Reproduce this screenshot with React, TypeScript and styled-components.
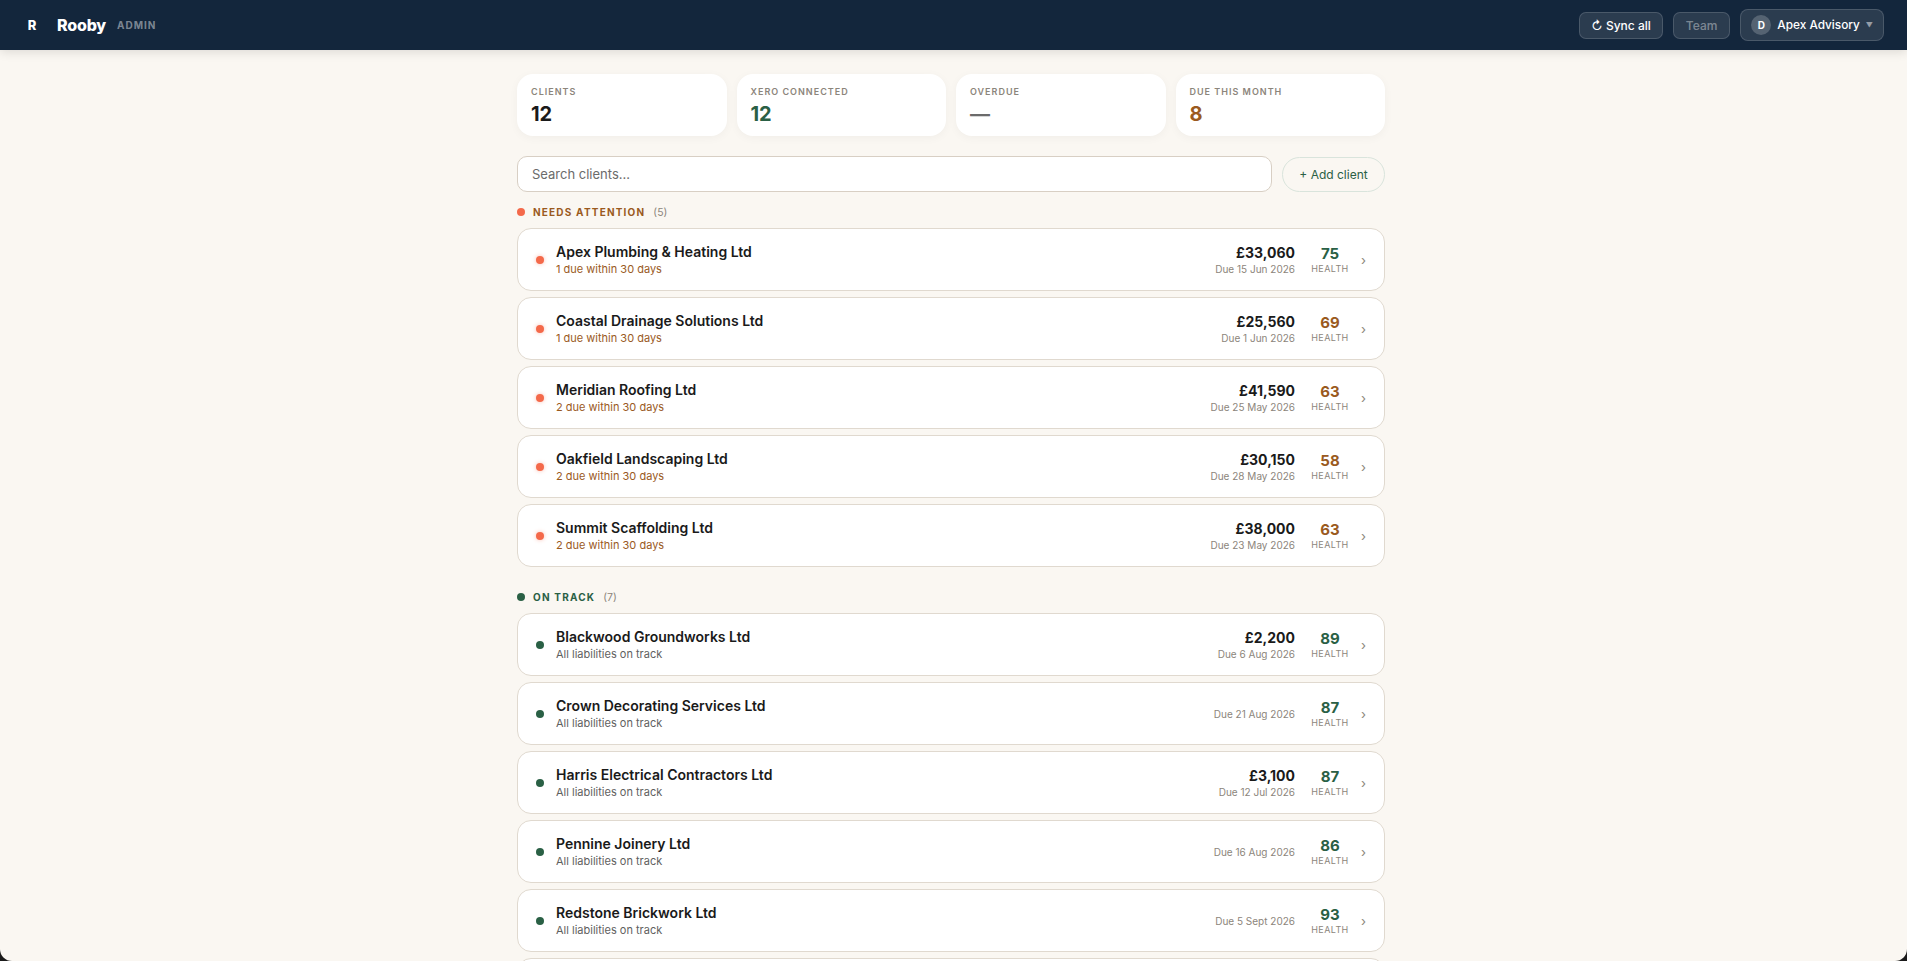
import React from 'react'
import styled, { createGlobalStyle } from 'styled-components'

const GlobalStyle = createGlobalStyle`
  html, body {
    margin: 0;
    height: 100%;
    overflow: hidden;
    background: #1a1a1a;
  }
  * {
    box-sizing: border-box;
  }
`

const Page = styled.div`
  height: 100vh;
  overflow: hidden;
  background: #faf7f2;
  border-radius: 0 0 12px 12px;
  font-family: Inter, "Liberation Sans", sans-serif;
  color: #1a1a1a;
`

const Header = styled.header`
  display: flex;
  align-items: center;
  justify-content: space-between;
  height: 50px;
  padding: 0 23px 0 16px;
  background: #13263c;
  box-shadow: 0 2px 10px rgba(0, 0, 0, 0.12);
`

const Brand = styled.div`
  display: flex;
  align-items: center;
`

const LogoMark = styled.div`
  width: 32px;
  height: 32px;
  display: flex;
  align-items: center;
  justify-content: center;
  color: #fff;
  font-size: 13px;
  font-weight: 800;
`

const BrandName = styled.span`
  margin-left: 9px;
  color: #fff;
  font-size: 16px;
  font-weight: 800;
  letter-spacing: -0.2px;
`

const AdminTag = styled.span`
  margin-left: 11px;
  color: rgba(255, 255, 255, 0.45);
  font-size: 10px;
  font-weight: 700;
  letter-spacing: 1px;
`

const Actions = styled.div`
  display: flex;
  align-items: center;
  gap: 10px;
`

const NavButton = styled.button<{ $muted?: boolean }>`
  height: 27px;
  padding: 0 ${props => (props.$muted ? '12px' : '11px')};
  background: rgba(255, 255, 255, 0.1);
  border: 1px solid rgba(255, 255, 255, 0.15);
  border-radius: 7px;
  color: ${props => (props.$muted ? 'rgba(255, 255, 255, 0.4)' : '#fff')};
  font-family: inherit;
  font-size: 12px;
  font-weight: 500;
`

const OrgSwitch = styled.button`
  display: flex;
  align-items: center;
  gap: 6px;
  height: 32px;
  padding: 0 10px;
  background: rgba(255, 255, 255, 0.1);
  border: 1px solid rgba(255, 255, 255, 0.15);
  border-radius: 8px;
  color: #fff;
  font-family: inherit;
  font-size: 11.8px;
  font-weight: 500;
`

const Avatar = styled.span`
  width: 20px;
  height: 20px;
  display: flex;
  align-items: center;
  justify-content: center;
  border-radius: 50%;
  background: rgba(255, 255, 255, 0.2);
  font-size: 10px;
  font-weight: 700;
`

const Caret = styled.span`
  color: rgba(255, 255, 255, 0.5);
  font-size: 7px;
`

const Main = styled.main`
  width: 868px;
  margin-left: 517px;
  padding-top: 24px;
`

const Stats = styled.div`
  display: grid;
  grid-template-columns: repeat(4, 1fr);
  gap: 10px;
`

const StatCard = styled.div`
  height: 62px;
  padding: 12px 14px;
  background: #fff;
  border-radius: 16px;
  box-shadow: 0 2px 10px rgba(0, 0, 0, 0.04);
`

const StatLabel = styled.div`
  color: #8c857b;
  font-size: 9px;
  font-weight: 600;
  letter-spacing: 1px;
  line-height: 11px;
`

const StatValue = styled.div<{ $color?: string }>`
  margin-top: 5px;
  color: ${props => props.$color || '#1a1a1a'};
  font-size: 20px;
  font-weight: 700;
  line-height: 24px;
`

const Toolbar = styled.div`
  display: flex;
  align-items: flex-end;
  gap: 10px;
  margin-top: 20px;
`

const Search = styled.input`
  flex: 1;
  height: 36px;
  padding: 0 14px;
  background: #fff;
  border: 1px solid #d8cfc4;
  border-radius: 10px;
  font-family: inherit;
  font-size: 13px;
  &::placeholder {
    color: #6b6b6b;
    opacity: 1;
  }
`

const AddButton = styled.button`
  width: 103px;
  height: 35px;
  background: transparent;
  border: 1px solid #d9e4dc;
  border-radius: 18px;
  color: #2a6045;
  font-family: inherit;
  font-size: 12px;
`

const SectionTitle = styled.div<{ $spaced?: boolean }>`
  display: flex;
  align-items: center;
  height: 16px;
  margin: ${props => (props.$spaced ? '22px' : '12px')} 0 8px;
`

const SectionDot = styled.span<{ $color: string }>`
  width: 8px;
  height: 8px;
  border-radius: 50%;
  background: ${props => props.$color};
`

const SectionName = styled.span<{ $color: string }>`
  margin-left: 8px;
  color: ${props => props.$color};
  font-size: 10px;
  font-weight: 700;
  letter-spacing: 1.2px;
`

const SectionCount = styled.span`
  margin-left: 8px;
  color: #8c857b;
  font-size: 10.5px;
`

const List = styled.div`
  display: flex;
  flex-direction: column;
  gap: 6px;
`

const Row = styled.div`
  display: flex;
  align-items: center;
  height: 63px;
  padding: 0 18px;
  background: #fff;
  border: 1px solid #e0d9cf;
  border-radius: 14px;
`

const RowDot = styled.span<{ $color: string; $glow?: boolean }>`
  flex: none;
  width: 8px;
  height: 8px;
  border-radius: 50%;
  background: ${props => props.$color};
  box-shadow: ${props => (props.$glow ? '0 0 4px rgba(240, 100, 70, 0.4)' : 'none')};
`

const RowBody = styled.div`
  flex: 1;
  margin-left: 12px;
`

const ClientName = styled.div`
  font-size: 14px;
  font-weight: 600;
  line-height: 18px;
`

const ClientNote = styled.div<{ $color: string }>`
  margin-top: 1px;
  color: ${props => props.$color};
  font-size: 11px;
  line-height: 14px;
`

const Money = styled.div`
  text-align: right;
`

const Amount = styled.div`
  margin-top: 1px;
  font-size: 14px;
  font-weight: 700;
  line-height: 18px;
`

const DueDate = styled.div`
  color: #8c857b;
  font-size: 10px;
  line-height: 14px;
`

const Health = styled.div`
  width: 38px;
  margin-left: 16px;
  text-align: center;
`

const Score = styled.div<{ $color: string }>`
  margin-top: 2px;
  color: ${props => props.$color};
  font-size: 15px;
  font-weight: 700;
  line-height: 18px;
`

const HealthLabel = styled.div`
  margin-top: -1px;
  color: #8c857b;
  font-size: 9px;
  letter-spacing: 0.4px;
  line-height: 14px;
`

const Chevron = styled.span`
  margin-left: 12px;
  color: #8c857b;
  font-size: 13px;
`

const GREEN = '#2a6045'
const AMBER = '#9a5a1e'
const CORAL = '#f4694a'

type Client = {
  name: string
  amount?: string
  due: string
  score: number
}

const attention: (Client & { note: string })[] = [
  { name: 'Apex Plumbing & Heating Ltd', note: '1 due within 30 days', amount: '£33,060', due: 'Due 15 Jun 2026', score: 75 },
  { name: 'Coastal Drainage Solutions Ltd', note: '1 due within 30 days', amount: '£25,560', due: 'Due 1 Jun 2026', score: 69 },
  { name: 'Meridian Roofing Ltd', note: '2 due within 30 days', amount: '£41,590', due: 'Due 25 May 2026', score: 63 },
  { name: 'Oakfield Landscaping Ltd', note: '2 due within 30 days', amount: '£30,150', due: 'Due 28 May 2026', score: 58 },
  { name: 'Summit Scaffolding Ltd', note: '2 due within 30 days', amount: '£38,000', due: 'Due 23 May 2026', score: 63 },
]

const onTrack: Client[] = [
  { name: 'Blackwood Groundworks Ltd', amount: '£2,200', due: 'Due 6 Aug 2026', score: 89 },
  { name: 'Crown Decorating Services Ltd', due: 'Due 21 Aug 2026', score: 87 },
  { name: 'Harris Electrical Contractors Ltd', amount: '£3,100', due: 'Due 12 Jul 2026', score: 87 },
  { name: 'Pennine Joinery Ltd', due: 'Due 16 Aug 2026', score: 86 },
  { name: 'Redstone Brickwork Ltd', due: 'Due 5 Sept 2026', score: 93 },
]

const ClientRow = ({ client, note, noteColor, dot }: { client: Client; note: string; noteColor: string; dot: string }) => (
  <Row>
    <RowDot $color={dot} $glow={dot === CORAL} />
    <RowBody>
      <ClientName>{client.name}</ClientName>
      <ClientNote $color={noteColor}>{note}</ClientNote>
    </RowBody>
    <Money>
      {client.amount && <Amount>{client.amount}</Amount>}
      <DueDate>{client.due}</DueDate>
    </Money>
    <Health>
      <Score $color={client.score >= 75 ? GREEN : AMBER}>{client.score}</Score>
      <HealthLabel>HEALTH</HealthLabel>
    </Health>
    <Chevron>›</Chevron>
  </Row>
)

const App = () => (
  <Page>
    <GlobalStyle />
    <Header>
      <Brand>
        <LogoMark>R</LogoMark>
        <BrandName>Rooby</BrandName>
        <AdminTag>ADMIN</AdminTag>
      </Brand>
      <Actions>
        <NavButton>↻ Sync all</NavButton>
        <NavButton $muted>Team</NavButton>
        <OrgSwitch>
          <Avatar>D</Avatar>
          Apex Advisory
          <Caret>▼</Caret>
        </OrgSwitch>
      </Actions>
    </Header>
    <Main>
      <Stats>
        <StatCard>
          <StatLabel>CLIENTS</StatLabel>
          <StatValue>12</StatValue>
        </StatCard>
        <StatCard>
          <StatLabel>XERO CONNECTED</StatLabel>
          <StatValue $color={GREEN}>12</StatValue>
        </StatCard>
        <StatCard>
          <StatLabel>OVERDUE</StatLabel>
          <StatValue $color="#6b6b6b">—</StatValue>
        </StatCard>
        <StatCard>
          <StatLabel>DUE THIS MONTH</StatLabel>
          <StatValue $color={AMBER}>8</StatValue>
        </StatCard>
      </Stats>
      <Toolbar>
        <Search placeholder="Search clients..." />
        <AddButton>+ Add client</AddButton>
      </Toolbar>
      <SectionTitle>
        <SectionDot $color={CORAL} />
        <SectionName $color={AMBER}>NEEDS ATTENTION</SectionName>
        <SectionCount>(5)</SectionCount>
      </SectionTitle>
      <List>
        {attention.map(client => (
          <ClientRow key={client.name} client={client} note={client.note} noteColor={AMBER} dot={CORAL} />
        ))}
      </List>
      <SectionTitle $spaced>
        <SectionDot $color={GREEN} />
        <SectionName $color={GREEN}>ON TRACK</SectionName>
        <SectionCount>(7)</SectionCount>
      </SectionTitle>
      <List>
        {onTrack.map(client => (
          <ClientRow key={client.name} client={client} note="All liabilities on track" noteColor="#5f5f5f" dot={GREEN} />
        ))}
        <Row />
      </List>
    </Main>
  </Page>
)

export default App
